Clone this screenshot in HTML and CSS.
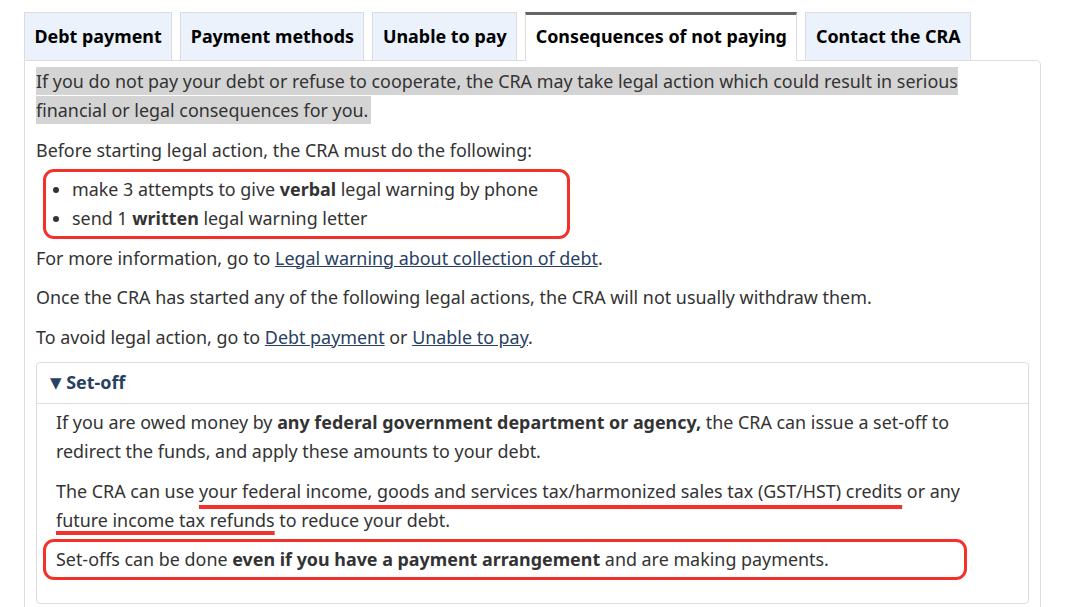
FILE: index.html
```html
<!DOCTYPE html>
<html lang="en">
<head>
    <meta charset="UTF-8">
    <meta name="viewport" content="width=device-width, initial-scale=1.0">
    <title>Consequences of not paying</title>
    <link rel="stylesheet" href="styles.css">
</head>
<body>
    <div class="page">
        <!-- Tab strip -->
        <ul class="tabs">
            <li class="tab">Debt payment</li>
            <li class="tab">Payment methods</li>
            <li class="tab">Unable to pay</li>
            <li class="tab active">Consequences of not paying</li>
            <li class="tab">Contact the CRA</li>
        </ul>

        <!-- Tab panel -->
        <div class="panel">
            <p><span class="marked">If you do not pay your debt or refuse to cooperate, the CRA may take legal action which could result in serious financial or legal consequences for you.</span></p>
            <p>Before starting legal action, the CRA must do the following:</p>
            <ul class="steps ring">
                <li>make 3 attempts to give <strong>verbal</strong> legal warning by phone</li>
                <li>send 1 <strong>written</strong> legal warning letter</li>
            </ul>
            <p>For more information, go to <a href="#">Legal warning about collection of debt</a>.</p>
            <p>Once the CRA has started any of the following legal actions, the CRA will not usually withdraw them.</p>
            <p>To avoid legal action, go to <a href="#">Debt payment</a> or <a href="#">Unable to pay</a>.</p>

            <details class="more" open>
                <summary><span class="arrow">&#9660;</span> Set-off</summary>
                <div class="more-body">
                    <p>If you are owed money by <strong>any federal government department or agency,</strong> the CRA can issue a set-off to redirect the funds, and apply these amounts to your debt.</p>
                    <p>The CRA can use <span class="scribble">your federal income, goods and services tax/harmonized sales tax (GST/HST) credits</span> or any <span class="scribble low">future income tax refunds</span> to reduce your debt.</p>
                    <p class="ring wide">Set-offs can be done <strong>even if you have a payment arrangement</strong> and are making payments.</p>
                </div>
            </details>
        </div>
    </div>
</body>
</html>
```

FILE: styles.css
```css
body {
    margin: 0;
    font-family: "Noto Sans", "Open Sans", sans-serif;
    font-size: 17.9px;
    line-height: 29px;
    color: #333;
    background: #fff;
}
.page {
    padding: 12px 39px 0 24px;
}
.tabs {
    display: flex;
    align-items: flex-end;
    gap: 8px;
    list-style: none;
    margin: 0;
    padding: 0;
}
.tab {
    padding: 9px 9.5px;
    border: 1px solid #dcdcdc;
    border-bottom: none;
    background-color: #ebf2fc;
    font-weight: bold;
    color: #000;
}
.tab.active {
    position: relative;
    z-index: 1;
    border-top: 3px solid #666;
    padding-top: 7px;
    padding-bottom: 10px;
    margin-bottom: -1px;
    background-color: #fff;
}
.panel {
    border: 1px solid #ddd;
    border-radius: 0 5px 0 0;
    padding: 6px 11px 40px 11px;
}
p {
    margin: 0 0 10.5px;
}
a {
    color: #284162;
}
.marked {
    background-color: #d4d4d4;
    padding: 2px 3px 2px 0;
}
.ring {
    outline: 3px solid #f3302a;
    outline-offset: 3px;
    border-radius: 5px;
}
.steps {
    box-sizing: border-box;
    width: 515px;
    margin: 0 0 10.5px 13px;
    padding-left: 23px;
}
.more {
    border: 1px solid #ddd;
    border-radius: 4px;
}
.more summary {
    list-style: none;
    padding: 5px 13px;
    border-bottom: 1px solid #ddd;
    color: #284162;
    font-weight: bold;
}
.more summary::-webkit-details-marker {
    display: none;
}
.arrow {
    font-family: "DejaVu Sans", sans-serif;
    font-size: 15px;
    vertical-align: 1px;
}
.more-body {
    padding: 4px 19px 18px;
}
.scribble {
    text-decoration: underline;
    text-decoration-color: #f3302a;
    text-decoration-thickness: 4px;
    text-underline-offset: 7px;
    text-decoration-skip-ink: none;
}
.scribble.low {
    text-underline-offset: 4px;
}
.ring.wide {
    box-sizing: border-box;
    width: 912px;
    margin-left: -7px;
    padding-left: 7px;
}
```
